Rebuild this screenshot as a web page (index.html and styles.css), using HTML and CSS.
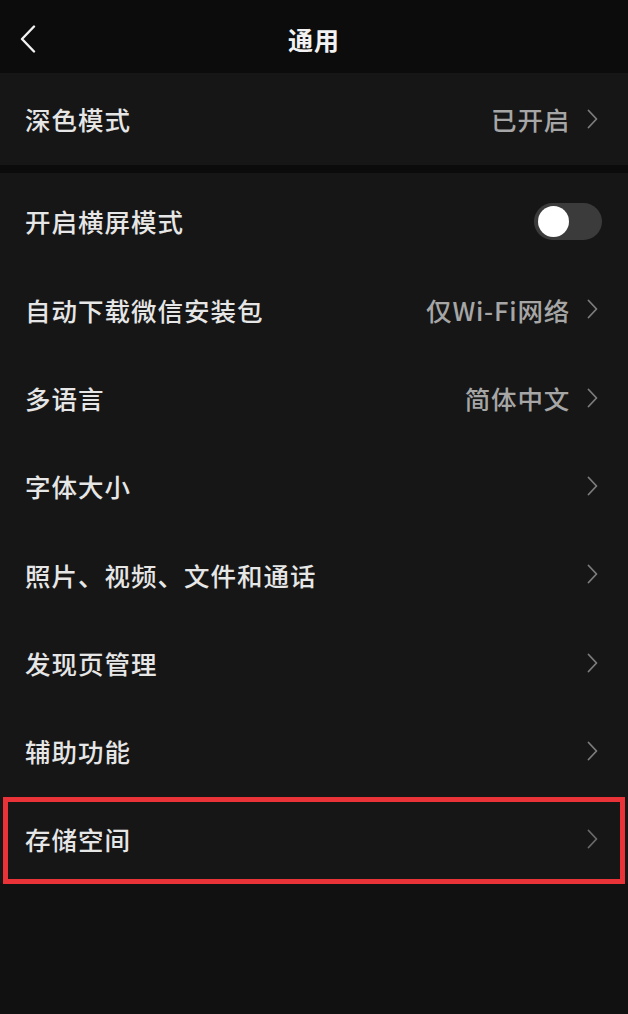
FILE: index.html
```html
<!DOCTYPE html>
<html lang="zh-CN">
<head>
<meta charset="utf-8">
<title>通用</title>
<link rel="stylesheet" href="styles.css">
</head>
<body>
<header class="nav">
  <svg class="back" width="16" height="28" viewBox="0 0 16 28"><polyline points="14,1.5 2,14 14,26.5" fill="none" stroke="#f2f2f2" stroke-width="2.4" stroke-linecap="round" stroke-linejoin="round"/></svg>
  <h1 class="title">通用</h1>
</header>

<section class="group first">
  <div class="row">
    <span class="label">深色模式</span>
    <span class="right"><span class="value">已开启</span><svg class="chev" width="11" height="20" viewBox="0 0 11 20"><polyline points="1.5,1.5 9.5,10 1.5,18.5" fill="none" stroke="#7c7c7c" stroke-width="1.8" stroke-linecap="round" stroke-linejoin="round"/></svg></span>
  </div>
</section>

<div class="sep"></div>

<section class="group second">
  <div class="row">
    <span class="label">开启横屏模式</span>
    <span class="toggle"><span class="knob"></span></span>
  </div>
  <div class="row">
    <span class="label">自动下载微信安装包</span>
    <span class="right"><span class="value">仅Wi-Fi网络</span><svg class="chev" width="11" height="20" viewBox="0 0 11 20"><polyline points="1.5,1.5 9.5,10 1.5,18.5" fill="none" stroke="#7c7c7c" stroke-width="1.8" stroke-linecap="round" stroke-linejoin="round"/></svg></span>
  </div>
  <div class="row">
    <span class="label">多语言</span>
    <span class="right"><span class="value">简体中文</span><svg class="chev" width="11" height="20" viewBox="0 0 11 20"><polyline points="1.5,1.5 9.5,10 1.5,18.5" fill="none" stroke="#7c7c7c" stroke-width="1.8" stroke-linecap="round" stroke-linejoin="round"/></svg></span>
  </div>
  <div class="row">
    <span class="label">字体大小</span>
    <span class="right"><svg class="chev" width="11" height="20" viewBox="0 0 11 20"><polyline points="1.5,1.5 9.5,10 1.5,18.5" fill="none" stroke="#7c7c7c" stroke-width="1.8" stroke-linecap="round" stroke-linejoin="round"/></svg></span>
  </div>
  <div class="row">
    <span class="label">照片、视频、文件和通话</span>
    <span class="right"><svg class="chev" width="11" height="20" viewBox="0 0 11 20"><polyline points="1.5,1.5 9.5,10 1.5,18.5" fill="none" stroke="#7c7c7c" stroke-width="1.8" stroke-linecap="round" stroke-linejoin="round"/></svg></span>
  </div>
  <div class="row">
    <span class="label">发现页管理</span>
    <span class="right"><svg class="chev" width="11" height="20" viewBox="0 0 11 20"><polyline points="1.5,1.5 9.5,10 1.5,18.5" fill="none" stroke="#7c7c7c" stroke-width="1.8" stroke-linecap="round" stroke-linejoin="round"/></svg></span>
  </div>
  <div class="row">
    <span class="label">辅助功能</span>
    <span class="right"><svg class="chev" width="11" height="20" viewBox="0 0 11 20"><polyline points="1.5,1.5 9.5,10 1.5,18.5" fill="none" stroke="#7c7c7c" stroke-width="1.8" stroke-linecap="round" stroke-linejoin="round"/></svg></span>
  </div>
  <div class="row highlighted">
    <span class="label">存储空间</span>
    <span class="right"><svg class="chev" width="11" height="20" viewBox="0 0 11 20"><polyline points="1.5,1.5 9.5,10 1.5,18.5" fill="none" stroke="#6a6a6a" stroke-width="1.8" stroke-linecap="round" stroke-linejoin="round"/></svg></span>
  </div>
</section>
</body>
</html>
```

FILE: styles.css
```css
html, body {
  margin: 0;
  padding: 0;
}
body {
  width: 628px;
  min-height: 1014px;
  background: #111111;
  font-family: "Noto Sans CJK SC", "Noto Sans", sans-serif;
  color: #e8e8e8;
  overflow: hidden;
}
.nav {
  height: 73px;
  background: #0c0c0c;
  display: flex;
  align-items: center;
  justify-content: center;
  position: relative;
}
.back {
  position: absolute;
  left: 20px;
  top: 25px;
}
.title {
  margin: 0;
  font-size: 25px;
  font-weight: 700;
  color: #f2f2f2;
  letter-spacing: 1px;
  line-height: 1;
  transform: translateY(3px);
}
.group {
  background: #161616;
}
.first .row {
  height: 92px;
}
.sep {
  height: 8px;
  background: #0b0b0b;
}
.second {
  padding-top: 4px;
}
.row {
  height: 88.3px;
  box-sizing: border-box;
  display: flex;
  align-items: center;
  justify-content: space-between;
  padding: 0 30px 0 25px;
}
.label {
  font-size: 25.5px;
  font-weight: 500;
  letter-spacing: 1px;
  color: #e6e6e6;
  line-height: 1;
}
.right {
  display: flex;
  align-items: center;
  gap: 17px;
}
.value {
  font-size: 25.5px;
  font-weight: 500;
  letter-spacing: 0.8px;
  color: #a6a6a6;
  line-height: 1;
}
.chev {
  display: block;
}
.toggle {
  width: 68px;
  height: 37px;
  border-radius: 19px;
  background: #3b3b3b;
  margin-right: -4px;
  display: flex;
  align-items: center;
  padding-left: 4px;
  box-sizing: border-box;
}
.knob {
  width: 31px;
  height: 31px;
  border-radius: 50%;
  background: #ffffff;
}
.highlighted {
  position: relative;
}
.highlighted::after {
  content: "";
  position: absolute;
  left: 3px;
  right: 3px;
  top: 2px;
  bottom: -1px;
  border: 5px solid #ea3338;
}
```
